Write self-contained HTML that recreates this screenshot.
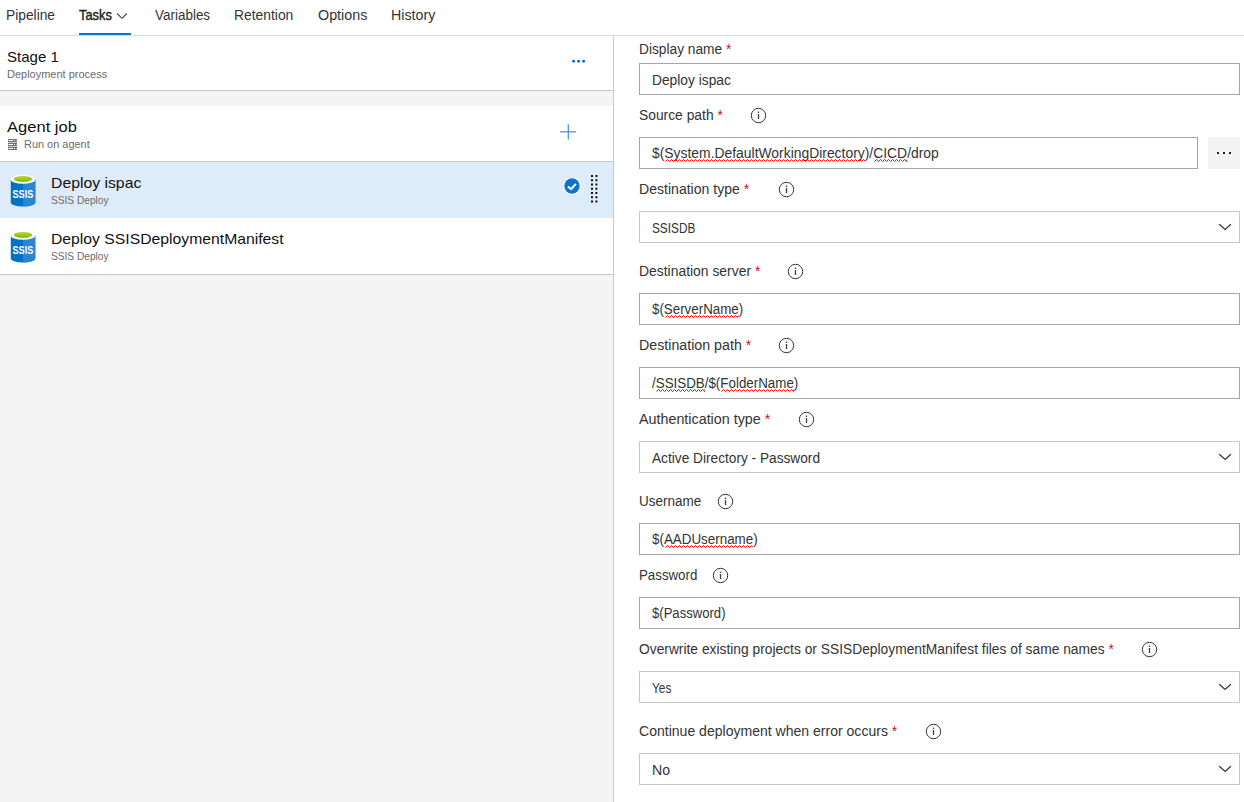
<!DOCTYPE html>
<html lang="en">
<head>
<meta charset="utf-8">
<title>Release pipeline - Tasks</title>
<style>
*{box-sizing:border-box;margin:0;padding:0}
html,body{width:1244px;height:802px;overflow:hidden;background:#fff}
body{font-family:"Liberation Sans",sans-serif;color:#222;position:relative;font-size:14px}
.abs{position:absolute;white-space:nowrap}
/* tabs */
#tabs{position:absolute;left:0;top:0;width:1244px;height:36px;border-bottom:1px solid #dcdcdc;background:#fff}
.tab{position:absolute;top:7px;font-size:14px;line-height:17px;color:#333;white-space:nowrap}
.tab.sel{font-weight:normal;color:#222;-webkit-text-stroke:.4px #222}
#ul{position:absolute;left:79px;top:33px;width:52px;height:2px;background:#0078d4}
/* left */
#left{position:absolute;left:0;top:36px;width:613px;height:766px;background:#f4f4f4}
#vline{position:absolute;left:613px;top:36px;width:1px;height:766px;background:#c8c8c8}
.sec{position:absolute;left:0;width:613px;background:#fff}
.t1{position:absolute;font-size:15px;line-height:18px;color:#111;white-space:nowrap}
.t2{position:absolute;font-size:11px;line-height:13px;color:#6b6b6b;white-space:nowrap}
/* right */
.lbl{position:absolute;left:638.8px;font-size:14px;line-height:17px;color:#333;white-space:nowrap}
.lbl b{color:#c8102e;font-weight:normal}
.inp{position:absolute;left:639px;width:601px;height:32px;border:1px solid #a6a6a6;background:#fff;font-size:14px;line-height:30px;padding-left:12.2px;color:#333;white-space:nowrap}
.inp.dd{border-color:#c8c8c8;line-height:32px}
.inp.lo{line-height:32px}
.sx{display:inline-block;transform:scaleX(var(--k));transform-origin:0 50%}
.sq{}
.info{position:absolute;width:17px;height:17px}
.chev{position:absolute;left:1218px;width:14px;height:8px}
</style>
</head>
<body>
<div id="tabs">
  <div class="sx tab" style="--k:0.9844;left:6px">Pipeline</div>
  <div class="sx tab sel" style="--k:0.9191;left:79.2px">Tasks</div>
  <svg class="abs" style="left:116px;top:12px" width="12" height="8" viewBox="0 0 12 8"><path d="M1 1.5 L6 6.3 L11 1.5" fill="none" stroke="#444" stroke-width="1.1"/></svg>
  <div class="sx tab" style="--k:0.9611;left:155px">Variables</div>
  <div class="sx tab" style="--k:0.9894;left:234px">Retention</div>
  <div class="sx tab" style="--k:1.0218;left:318px">Options</div>
  <div class="sx tab" style="--k:1.0169;left:391px">History</div>
  <div id="ul"></div>
</div>

<div id="left">
  <!-- stage header -->
  <div class="sec" style="top:0;height:55px;border-bottom:1px solid #c8c8c8"></div>
  <!-- agent job -->
  <div class="sec" style="top:70px;height:56px;border-bottom:1px solid #c8c8c8"></div>
  <!-- selected -->
  <div class="sec" style="top:126px;height:56px;background:#deecf9"></div>
  <!-- second -->
  <div class="sec" style="top:182px;height:57px;border-bottom:1px solid #c8c8c8"></div>
</div>
<div id="vline"></div>

<div class="sx t1" style="--k:1.0035;left:6.5px;top:48px">Stage 1</div>
<div class="sx t2" style="--k:0.9992;left:7px;top:68px">Deployment process</div>
<svg class="abs" style="left:571px;top:58px" width="16" height="6" viewBox="0 0 16 6"><circle cx="2.6" cy="3.2" r="1.45" fill="#0a6fc9"/><circle cx="7.6" cy="3.2" r="1.45" fill="#0a6fc9"/><circle cx="12.6" cy="3.2" r="1.45" fill="#0a6fc9"/></svg>

<div class="sx t1" style="--k:1.1027;left:6.5px;top:118px">Agent job</div>
<svg class="abs" style="left:8px;top:139px" width="9" height="11" viewBox="0 0 9 11"><g fill="#6e6e6e"><rect x="0" y="0" width="9" height="3"/><rect x="0" y="4" width="9" height="3"/><rect x="0" y="8" width="9" height="3"/></g><g fill="#cfcfcf"><rect x="0" y="3" width="9" height="1"/><rect x="0" y="7" width="9" height="1"/></g><g fill="#fff"><rect x="0.5" y="1" width="8" height="1"/><rect x="0.5" y="5" width="8" height="1"/><rect x="0.5" y="9" width="8" height="1"/></g><g fill="#777"><rect x="5" y="1" width="1" height="1"/><rect x="7" y="1" width="1" height="1"/><rect x="5" y="5" width="1" height="1"/><rect x="7" y="5" width="1" height="1"/><rect x="5" y="9" width="1" height="1"/><rect x="7" y="9" width="1" height="1"/></g></svg>
<div class="sx t2" style="--k:0.9945;left:24px;top:138px">Run on agent</div>
<svg class="abs" style="left:560px;top:124px" width="17" height="16" viewBox="0 0 17 16"><path d="M0 7.8H16.2" stroke="#7f8ccb" stroke-width="1.4" fill="none"/><path d="M8.3 0.3V15.5" stroke="#3f8fdf" stroke-width="1.2" fill="none"/></svg>

<!-- item 1 -->
<svg class="abs" style="left:10px;top:174px" width="26" height="34" viewBox="0 0 26 34"><linearGradient id="gg1" x1="0" y1="0" x2="0" y2="1"><stop offset="0" stop-color="#bcd636"/><stop offset="0.45" stop-color="#a4cb1a"/><stop offset="1" stop-color="#74b400"/></linearGradient><path d="M0.8 5.4 V28.2 A12.25 4.4 0 0 0 25.3 28.2 V5.4 Z" fill="#0072c6"/>
   <path d="M12.95 5.4 H25.3 V28.2 A12.25 4.4 0 0 1 12.95 32.6 Z" fill="#2a86d2"/>
   <ellipse cx="13.05" cy="5.4" rx="12.25" ry="4.45" fill="#fff"/>
   <ellipse cx="13" cy="4.85" rx="9.3" ry="2.95" fill="url(#gg1)"/>
   <text x="2.6" y="23.6" textLength="20.6" lengthAdjust="spacingAndGlyphs" font-family="Liberation Sans, sans-serif" font-weight="bold" font-size="10.4" fill="#fff">SSIS</text></svg>
<div class="sx t1" style="--k:1.0513;left:50.5px;top:174px">Deploy ispac</div>
<div class="sx t2" style="--k:0.9234;left:51px;top:194px">SSIS Deploy</div>
<svg class="abs" style="left:562.7px;top:177px" width="18" height="18" viewBox="0 0 18 18"><circle cx="9" cy="9" r="8.8" fill="#fff"/><circle cx="9" cy="9" r="7.7" fill="#0b74d1"/><path d="M4.9 9.4 L8.1 12.2 L12.9 6.9" fill="none" stroke="#fff" stroke-width="2"/></svg>
<svg class="abs" style="left:591.2px;top:175.1px" width="7" height="28" viewBox="0 0 7 28"><g fill="#111"><rect x="0" y="0.00" width="2" height="2"/><rect x="4.4" y="0.00" width="2" height="2"/><rect x="0" y="4.25" width="2" height="2"/><rect x="4.4" y="4.25" width="2" height="2"/><rect x="0" y="8.50" width="2" height="2"/><rect x="4.4" y="8.50" width="2" height="2"/><rect x="0" y="12.75" width="2" height="2"/><rect x="4.4" y="12.75" width="2" height="2"/><rect x="0" y="17.00" width="2" height="2"/><rect x="4.4" y="17.00" width="2" height="2"/><rect x="0" y="21.25" width="2" height="2"/><rect x="4.4" y="21.25" width="2" height="2"/><rect x="0" y="25.50" width="2" height="2"/><rect x="4.4" y="25.50" width="2" height="2"/></g></svg>

<!-- item 2 -->
<svg class="abs" style="left:10px;top:230px" width="26" height="34" viewBox="0 0 26 34"><linearGradient id="gg2" x1="0" y1="0" x2="0" y2="1"><stop offset="0" stop-color="#bcd636"/><stop offset="0.45" stop-color="#a4cb1a"/><stop offset="1" stop-color="#74b400"/></linearGradient><path d="M0.8 5.4 V28.2 A12.25 4.4 0 0 0 25.3 28.2 V5.4 Z" fill="#0072c6"/>
   <path d="M12.95 5.4 H25.3 V28.2 A12.25 4.4 0 0 1 12.95 32.6 Z" fill="#2a86d2"/>
   <ellipse cx="13.05" cy="5.4" rx="12.25" ry="4.45" fill="#fff"/>
   <ellipse cx="13" cy="4.85" rx="9.3" ry="2.95" fill="url(#gg2)"/>
   <text x="2.6" y="23.6" textLength="20.6" lengthAdjust="spacingAndGlyphs" font-family="Liberation Sans, sans-serif" font-weight="bold" font-size="10.4" fill="#fff">SSIS</text></svg>
<div class="sx t1" style="--k:1.0488;left:50.5px;top:230px">Deploy SSISDeploymentManifest</div>
<div class="sx t2" style="--k:0.9234;left:51px;top:250px">SSIS Deploy</div>


<!-- right panel -->
<div class="sx lbl" style="--k:0.9803;top:41px">Display name <b>*</b></div>
<div class="inp lo" style="top:63px"><span class="sx" style="--k:0.9843">Deploy ispac</span></div>

<div class="sx lbl" style="--k:0.9877;top:107px">Source path <b>*</b></div>
<svg class="info" style="left:750px;top:107px" viewBox="0 0 17 17"><circle cx="8.5" cy="8.5" r="7.2" fill="#fff" stroke="#333" stroke-width="1"/><rect x="7.85" y="7" width="1.3" height="5" fill="#3a3a5a"/><rect x="7.85" y="4.6" width="1.3" height="1.4" fill="#3a3a5a"/></svg>
<div class="inp" style="top:137px;width:559px"><span class="sx" style="--k:0.9917">$(<span class="sq">System.DefaultWorkingDirectory</span>)/<span class="sq">CICD</span>/drop</span></div>
<div class="abs" style="left:1208px;top:137px;width:32px;height:32px;background:#f4f4f4"></div>
<svg class="abs" style="left:1216px;top:151px" width="16" height="4" viewBox="0 0 16 4"><rect x="1" y="1" width="2" height="2" fill="#222"/><rect x="7" y="1" width="2" height="2" fill="#222"/><rect x="13" y="1" width="2" height="2" fill="#222"/></svg>

<div class="sx lbl" style="--k:1.0050;top:181px">Destination type <b>*</b></div>
<svg class="info" style="left:777.6px;top:181px" viewBox="0 0 17 17"><circle cx="8.5" cy="8.5" r="7.2" fill="#fff" stroke="#333" stroke-width="1"/><rect x="7.85" y="7" width="1.3" height="5" fill="#3a3a5a"/><rect x="7.85" y="4.6" width="1.3" height="1.4" fill="#3a3a5a"/></svg>
<div class="inp dd" style="top:211px"><span class="sx" style="--k:0.8431">SSISDB</span></div>
<svg class="chev" style="top:223px" viewBox="0 0 14 8"><path d="M1.3 1.2 L7.1 6.5 L12.9 1.2" fill="none" stroke="#333" stroke-width="1.2"/></svg>

<div class="sx lbl" style="--k:0.9929;top:263px">Destination server <b>*</b></div>
<svg class="info" style="left:787px;top:263px" viewBox="0 0 17 17"><circle cx="8.5" cy="8.5" r="7.2" fill="#fff" stroke="#333" stroke-width="1"/><rect x="7.85" y="7" width="1.3" height="5" fill="#3a3a5a"/><rect x="7.85" y="4.6" width="1.3" height="1.4" fill="#3a3a5a"/></svg>
<div class="inp" style="top:293px"><span class="sx" style="--k:0.9528">$(<span class="sq">ServerName</span>)</span></div>

<div class="sx lbl" style="--k:1.0160;top:337px">Destination path <b>*</b></div>
<svg class="info" style="left:778.2px;top:337px" viewBox="0 0 17 17"><circle cx="8.5" cy="8.5" r="7.2" fill="#fff" stroke="#333" stroke-width="1"/><rect x="7.85" y="7" width="1.3" height="5" fill="#3a3a5a"/><rect x="7.85" y="4.6" width="1.3" height="1.4" fill="#3a3a5a"/></svg>
<div class="inp" style="top:367px"><span class="sx" style="--k:0.9544">/<span class="sq">SSISDB</span>/$(<span class="sq">FolderName</span>)</span></div>

<div class="sx lbl" style="--k:1.0223;top:411px">Authentication type <b>*</b></div>
<svg class="info" style="left:797.6px;top:411px" viewBox="0 0 17 17"><circle cx="8.5" cy="8.5" r="7.2" fill="#fff" stroke="#333" stroke-width="1"/><rect x="7.85" y="7" width="1.3" height="5" fill="#3a3a5a"/><rect x="7.85" y="4.6" width="1.3" height="1.4" fill="#3a3a5a"/></svg>
<div class="inp dd" style="top:441px"><span class="sx" style="--k:0.9771">Active Directory - Password</span></div>
<svg class="chev" style="top:453px" viewBox="0 0 14 8"><path d="M1.3 1.2 L7.1 6.5 L12.9 1.2" fill="none" stroke="#333" stroke-width="1.2"/></svg>

<div class="sx lbl" style="--k:0.9645;top:493px">Username</div>
<svg class="info" style="left:716.7px;top:493px" viewBox="0 0 17 17"><circle cx="8.5" cy="8.5" r="7.2" fill="#fff" stroke="#333" stroke-width="1"/><rect x="7.85" y="7" width="1.3" height="5" fill="#3a3a5a"/><rect x="7.85" y="4.6" width="1.3" height="1.4" fill="#3a3a5a"/></svg>
<div class="inp" style="top:523px"><span class="sx" style="--k:0.9566">$(<span class="sq">AADUsername</span>)</span></div>

<div class="sx lbl" style="--k:0.9484;top:567px">Password</div>
<svg class="info" style="left:712.3px;top:567px" viewBox="0 0 17 17"><circle cx="8.5" cy="8.5" r="7.2" fill="#fff" stroke="#333" stroke-width="1"/><rect x="7.85" y="7" width="1.3" height="5" fill="#3a3a5a"/><rect x="7.85" y="4.6" width="1.3" height="1.4" fill="#3a3a5a"/></svg>
<div class="inp" style="top:597px"><span class="sx" style="--k:0.9352">$(Password)</span></div>

<div class="sx lbl" style="--k:0.9858;top:641px">Overwrite existing projects or SSISDeploymentManifest files of same names <b>*</b></div>
<svg class="info" style="left:1141px;top:641px" viewBox="0 0 17 17"><circle cx="8.5" cy="8.5" r="7.2" fill="#fff" stroke="#333" stroke-width="1"/><rect x="7.85" y="7" width="1.3" height="5" fill="#3a3a5a"/><rect x="7.85" y="4.6" width="1.3" height="1.4" fill="#3a3a5a"/></svg>
<div class="inp dd" style="top:671px"><span class="sx" style="--k:0.8449">Yes</span></div>
<svg class="chev" style="top:683px" viewBox="0 0 14 8"><path d="M1.3 1.2 L7.1 6.5 L12.9 1.2" fill="none" stroke="#333" stroke-width="1.2"/></svg>

<div class="sx lbl" style="--k:1.0027;top:723px">Continue deployment when error occurs <b>*</b></div>
<svg class="info" style="left:924.8px;top:723px" viewBox="0 0 17 17"><circle cx="8.5" cy="8.5" r="7.2" fill="#fff" stroke="#333" stroke-width="1"/><rect x="7.85" y="7" width="1.3" height="5" fill="#3a3a5a"/><rect x="7.85" y="4.6" width="1.3" height="1.4" fill="#3a3a5a"/></svg>
<div class="inp dd" style="top:753px"><span class="sx" style="--k:1.0108">No</span></div>
<svg class="chev" style="top:765px" viewBox="0 0 14 8"><path d="M1.3 1.2 L7.1 6.5 L12.9 1.2" fill="none" stroke="#333" stroke-width="1.2"/></svg>

<svg class="abs" style="left:665.0px;top:159.1px" width="200.0" height="3" viewBox="0 0 200.0 3"><path d="M0.5 2.55 L2.5 0.45 L4.5 2.55 L6.5 0.45 L8.5 2.55 L10.5 0.45 L12.5 2.55 L14.5 0.45 L16.5 2.55 L18.5 0.45 L20.5 2.55 L22.5 0.45 L24.5 2.55 L26.5 0.45 L28.5 2.55 L30.5 0.45 L32.5 2.55 L34.5 0.45 L36.5 2.55 L38.5 0.45 L40.5 2.55 L42.5 0.45 L44.5 2.55 L46.5 0.45 L48.5 2.55 L50.5 0.45 L52.5 2.55 L54.5 0.45 L56.5 2.55 L58.5 0.45 L60.5 2.55 L62.5 0.45 L64.5 2.55 L66.5 0.45 L68.5 2.55 L70.5 0.45 L72.5 2.55 L74.5 0.45 L76.5 2.55 L78.5 0.45 L80.5 2.55 L82.5 0.45 L84.5 2.55 L86.5 0.45 L88.5 2.55 L90.5 0.45 L92.5 2.55 L94.5 0.45 L96.5 2.55 L98.5 0.45 L100.5 2.55 L102.5 0.45 L104.5 2.55 L106.5 0.45 L108.5 2.55 L110.5 0.45 L112.5 2.55 L114.5 0.45 L116.5 2.55 L118.5 0.45 L120.5 2.55 L122.5 0.45 L124.5 2.55 L126.5 0.45 L128.5 2.55 L130.5 0.45 L132.5 2.55 L134.5 0.45 L136.5 2.55 L138.5 0.45 L140.5 2.55 L142.5 0.45 L144.5 2.55 L146.5 0.45 L148.5 2.55 L150.5 0.45 L152.5 2.55 L154.5 0.45 L156.5 2.55 L158.5 0.45 L160.5 2.55 L162.5 0.45 L164.5 2.55 L166.5 0.45 L168.5 2.55 L170.5 0.45 L172.5 2.55 L174.5 0.45 L176.5 2.55 L178.5 0.45 L180.5 2.55 L182.5 0.45 L184.5 2.55 L186.5 0.45 L188.5 2.55 L190.5 0.45 L192.5 2.55 L194.5 0.45 L196.5 2.55 L198.5 0.45 L200.0 2.55" fill="none" stroke="#ff1010" stroke-width="1.0"/></svg>
<svg class="abs" style="left:874.0px;top:159.1px" width="33.0" height="3" viewBox="0 0 33.0 3"><path d="M0.5 2.55 L2.5 0.45 L4.5 2.55 L6.5 0.45 L8.5 2.55 L10.5 0.45 L12.5 2.55 L14.5 0.45 L16.5 2.55 L18.5 0.45 L20.5 2.55 L22.5 0.45 L24.5 2.55 L26.5 0.45 L28.5 2.55 L30.5 0.45 L32.5 2.55 L33.0 0.45" fill="none" stroke="#ff1010" stroke-width="1.0"/></svg>
<svg class="abs" style="left:665.0px;top:315.1px" width="74.0" height="3" viewBox="0 0 74.0 3"><path d="M0.5 2.55 L2.5 0.45 L4.5 2.55 L6.5 0.45 L8.5 2.55 L10.5 0.45 L12.5 2.55 L14.5 0.45 L16.5 2.55 L18.5 0.45 L20.5 2.55 L22.5 0.45 L24.5 2.55 L26.5 0.45 L28.5 2.55 L30.5 0.45 L32.5 2.55 L34.5 0.45 L36.5 2.55 L38.5 0.45 L40.5 2.55 L42.5 0.45 L44.5 2.55 L46.5 0.45 L48.5 2.55 L50.5 0.45 L52.5 2.55 L54.5 0.45 L56.5 2.55 L58.5 0.45 L60.5 2.55 L62.5 0.45 L64.5 2.55 L66.5 0.45 L68.5 2.55 L70.5 0.45 L72.5 2.55 L74.0 0.45" fill="none" stroke="#ff1010" stroke-width="1.0"/></svg>
<svg class="abs" style="left:656.0px;top:389.1px" width="49.0" height="3" viewBox="0 0 49.0 3"><path d="M0.5 2.55 L2.5 0.45 L4.5 2.55 L6.5 0.45 L8.5 2.55 L10.5 0.45 L12.5 2.55 L14.5 0.45 L16.5 2.55 L18.5 0.45 L20.5 2.55 L22.5 0.45 L24.5 2.55 L26.5 0.45 L28.5 2.55 L30.5 0.45 L32.5 2.55 L34.5 0.45 L36.5 2.55 L38.5 0.45 L40.5 2.55 L42.5 0.45 L44.5 2.55 L46.5 0.45 L48.5 2.55 L49.0 0.45" fill="none" stroke="#ff1010" stroke-width="1.0"/></svg>
<svg class="abs" style="left:721.0px;top:389.1px" width="73.0" height="3" viewBox="0 0 73.0 3"><path d="M0.5 2.55 L2.5 0.45 L4.5 2.55 L6.5 0.45 L8.5 2.55 L10.5 0.45 L12.5 2.55 L14.5 0.45 L16.5 2.55 L18.5 0.45 L20.5 2.55 L22.5 0.45 L24.5 2.55 L26.5 0.45 L28.5 2.55 L30.5 0.45 L32.5 2.55 L34.5 0.45 L36.5 2.55 L38.5 0.45 L40.5 2.55 L42.5 0.45 L44.5 2.55 L46.5 0.45 L48.5 2.55 L50.5 0.45 L52.5 2.55 L54.5 0.45 L56.5 2.55 L58.5 0.45 L60.5 2.55 L62.5 0.45 L64.5 2.55 L66.5 0.45 L68.5 2.55 L70.5 0.45 L72.5 2.55 L73.0 0.45" fill="none" stroke="#ff1010" stroke-width="1.0"/></svg>
<svg class="abs" style="left:665.0px;top:545.1px" width="88.0" height="3" viewBox="0 0 88.0 3"><path d="M0.5 2.55 L2.5 0.45 L4.5 2.55 L6.5 0.45 L8.5 2.55 L10.5 0.45 L12.5 2.55 L14.5 0.45 L16.5 2.55 L18.5 0.45 L20.5 2.55 L22.5 0.45 L24.5 2.55 L26.5 0.45 L28.5 2.55 L30.5 0.45 L32.5 2.55 L34.5 0.45 L36.5 2.55 L38.5 0.45 L40.5 2.55 L42.5 0.45 L44.5 2.55 L46.5 0.45 L48.5 2.55 L50.5 0.45 L52.5 2.55 L54.5 0.45 L56.5 2.55 L58.5 0.45 L60.5 2.55 L62.5 0.45 L64.5 2.55 L66.5 0.45 L68.5 2.55 L70.5 0.45 L72.5 2.55 L74.5 0.45 L76.5 2.55 L78.5 0.45 L80.5 2.55 L82.5 0.45 L84.5 2.55 L86.5 0.45 L88.0 2.55" fill="none" stroke="#ff1010" stroke-width="1.0"/></svg>
</body>
</html>
